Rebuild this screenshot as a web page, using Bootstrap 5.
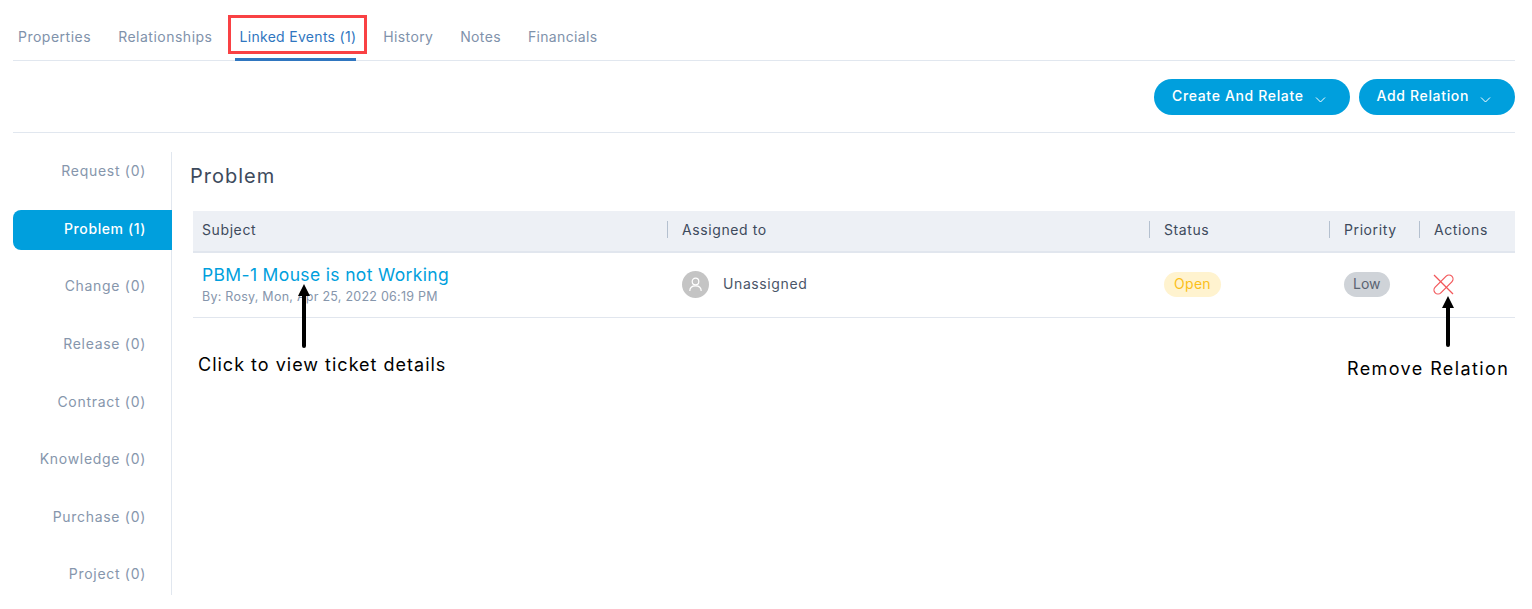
<!DOCTYPE html>
<html lang="en">
  <head>
    <meta charset="UTF-8" />
    <meta name="viewport" content="width=device-width, initial-scale=1.0" />
    <title>Linked Events</title>
    <link href="https://cdn.jsdelivr.net/npm/bootstrap@5.3.0/dist/css/bootstrap.min.css" rel="stylesheet" />
    <style>
      body {
        font-family: "Inter", "Liberation Sans", sans-serif;
        background: #fff;
        color: #3d4a5c;
        overflow: hidden;
      }
      .page-wrap {
        position: relative;
        height: 609px;
        padding: 0 17px 0 13px;
      }
      /* tabs */
      .tab-bar {
        height: 61px;
        gap: 22px;
        border-bottom: 1px solid #e1e7ef;
      }
      .tab-item {
        height: 61px;
        padding: 28px 0 0 5px;
        font-size: 14px;
        line-height: 18px;
        letter-spacing: 0.5px;
        color: #7f92ab;
        text-decoration: none;
      }
      .tab-item.is-active {
        color: #2f76c0;
        letter-spacing: 0.3px;
        border-bottom: 3px solid #2f76c0;
      }
      .tab-item.is-active ~ .tab-item {
        letter-spacing: 0.35px;
      }
      .tab-highlight {
        position: absolute;
        left: 228px;
        top: 15px;
        width: 139px;
        height: 39px;
        border: 3px solid #f94144;
      }
      /* toolbar */
      .tool-row {
        height: 72px;
        padding-top: 18px;
        gap: 9px;
        border-bottom: 1px solid #e1e7ef;
      }
      .btn-relate {
        height: 36px;
        padding: 0 24px 4px 18px;
        border: 0;
        border-radius: 18px;
        background: #009fdd;
        color: #fff;
        font-size: 14px;
        font-weight: 500;
        letter-spacing: 0.65px;
      }
      .btn-relate svg {
        margin: 8px 0 0 11px;
      }
      /* side menu */
      .body-row {
        margin-top: 19px;
      }
      .side-menu {
        width: 159px;
        flex: none;
        height: 443px;
        padding-top: 0.4px;
        gap: 17.75px;
        border-right: 1px solid #e1e7ef;
      }
      .side-item {
        height: 40px;
        line-height: 38px;
        padding-right: 25px;
        text-align: right;
        font-size: 14px;
        letter-spacing: 0.7px;
        color: #8696ac;
      }
      .side-item.is-active {
        margin-right: -1px;
        padding-right: 26px;
        background: #009fdd;
        color: #fff;
        font-weight: 500;
        letter-spacing: 0.6px;
        border-radius: 8px 0 0 8px;
      }
      /* table */
      .main-pane {
        padding-left: 18px;
      }
      .pane-title {
        font-size: 20px;
        line-height: 24px;
        font-weight: 400;
        letter-spacing: 1px;
        margin: 12px 0 23px;
        color: #3d4a5c;
      }
      .rel-table {
        margin-left: 3px;
        width: 1322px;
        table-layout: fixed;
        margin-bottom: 0;
      }
      .rel-table th {
        height: 41px;
        padding: 0 0 3px;
        background: #edf0f5;
        border-bottom: 2px solid #e1e6ee;
        font-size: 14px;
        font-weight: 400;
        letter-spacing: 0.6px;
        color: #3d4a5c;
        vertical-align: middle;
      }
      .head-cell {
        border-left: 1px solid #b4c0cf;
        padding-left: 14px;
        line-height: 17px;
      }
      .head-cell.no-rule {
        border-left: 0;
        padding-left: 9px;
      }
      .rel-table td {
        height: 65px;
        padding: 0 0 0 15px;
        border-bottom: 1px solid #e1e6ee;
        vertical-align: middle;
        font-size: 14px;
        color: #4a5668;
      }
      .rel-table td:first-child {
        padding-left: 9px;
      }
      .ticket-link {
        display: block;
        font-size: 17.5px;
        line-height: 22px;
        letter-spacing: 0.35px;
        margin-bottom: 3px;
        color: #009fdd;
        text-decoration: none;
      }
      .ticket-meta {
        font-size: 12.5px;
        line-height: 16px;
        letter-spacing: 0.25px;
        color: #8696ac;
      }
      .user-dot {
        width: 27px;
        height: 27px;
        border-radius: 50%;
        background: #c4c4c4;
      }
      .user-name {
        padding-bottom: 2px;
        margin-left: 14px;
        letter-spacing: 0.6px;
      }
      .state-pill {
        display: inline-block;
        height: 25px;
        line-height: 23px;
        padding: 0 9px;
        border-radius: 13px;
        font-size: 14px;
      }
      .pill-open {
        background: #fff3cf;
        color: #fbbf1a;
        padding: 0 10px;
        letter-spacing: 0.3px;
      }
      .pill-low {
        background: #cfd3d8;
        color: #5a6472;
      }
      .unlink-icon {
        margin-left: -2px;
      }
      /* annotations */
      .note-arrow {
        position: absolute;
      }
      .note-text {
        position: absolute;
        font-size: 18px;
        line-height: 24px;
        letter-spacing: 1px;
        color: #000;
        white-space: nowrap;
      }
      .note-wide {
        letter-spacing: 1.4px;
      }
    </style>
  </head>
  <body>
    <div class="page-wrap">
      <nav class="tab-bar d-flex">
        <a class="tab-item" href="#">Properties</a>
        <a class="tab-item" href="#">Relationships</a>
        <a class="tab-item is-active" href="#">Linked Events (1)</a>
        <a class="tab-item" href="#">History</a>
        <a class="tab-item" href="#">Notes</a>
        <a class="tab-item" href="#">Financials</a>
      </nav>

      <div class="tool-row d-flex justify-content-end align-items-start">
        <button class="btn-relate d-flex align-items-center" type="button">
          Create And Relate
          <svg width="11" height="7" viewBox="0 0 11 7" fill="none" stroke="#fff" stroke-width="1"><path d="M1 1.5 5.5 6 10 1.5" /></svg>
        </button>
        <button class="btn-relate d-flex align-items-center" type="button">
          Add Relation
          <svg width="11" height="7" viewBox="0 0 11 7" fill="none" stroke="#fff" stroke-width="1"><path d="M1 1.5 5.5 6 10 1.5" /></svg>
        </button>
      </div>

      <div class="body-row d-flex">
        <div class="side-menu d-flex flex-column">
          <div class="side-item">Request (0)</div>
          <div class="side-item is-active">Problem (1)</div>
          <div class="side-item">Change (0)</div>
          <div class="side-item">Release (0)</div>
          <div class="side-item">Contract (0)</div>
          <div class="side-item">Knowledge (0)</div>
          <div class="side-item">Purchase (0)</div>
          <div class="side-item">Project (0)</div>
        </div>

        <div class="main-pane flex-grow-1">
          <h2 class="pane-title">Problem</h2>
          <table class="table rel-table">
            <colgroup>
              <col style="width: 474px" />
              <col style="width: 482px" />
              <col style="width: 180px" />
              <col style="width: 90px" />
              <col style="width: 96px" />
            </colgroup>
            <thead>
              <tr>
                <th><div class="head-cell no-rule">Subject</div></th>
                <th><div class="head-cell">Assigned to</div></th>
                <th><div class="head-cell">Status</div></th>
                <th><div class="head-cell">Priority</div></th>
                <th><div class="head-cell">Actions</div></th>
              </tr>
            </thead>
            <tbody>
              <tr>
                <td>
                  <a class="ticket-link" href="#">PBM-1 Mouse is not Working</a>
                  <div class="ticket-meta">By: Rosy, Mon, Apr 25, 2022 06:19 PM</div>
                </td>
                <td>
                  <div class="d-flex align-items-center">
                    <span class="user-dot d-flex align-items-center justify-content-center">
                      <svg width="15" height="15" viewBox="0 0 15 15" fill="none" stroke="#fff" stroke-width="1.2"><circle cx="7.5" cy="4.5" r="3.3" /><path d="M1.8 14c0-3.2 2.2-5.2 5.7-5.2s5.7 2 5.7 5.2" /></svg>
                    </span>
                    <span class="user-name">Unassigned</span>
                  </div>
                </td>
                <td><span class="state-pill pill-open">Open</span></td>
                <td><span class="state-pill pill-low">Low</span></td>
                <td>
                  <svg class="d-block unlink-icon" width="23" height="23" viewBox="0 0 23 23" fill="none" stroke="#f2575a" stroke-width="1.2"><path d="M2 2 21 21" /><path d="M3.17 14.17 14.17 3.17a4 4 0 0 1 5.66 5.66L8.83 19.83a4 4 0 0 1-5.66-5.66Z" /></svg>
                </td>
              </tr>
            </tbody>
          </table>
        </div>
      </div>

      <!-- annotations drawn over the screenshot -->
      <div class="tab-highlight"></div>
      <svg class="note-arrow" style="left: 297px; top: 284px" width="14" height="66" viewBox="0 0 14 66"><path d="M7 0 13 12H9V62a2 2 0 0 1-4 0V12H1Z" fill="#000" /></svg>
      <div class="note-text" style="left: 198px; top: 353px">Click to view ticket details</div>
      <svg class="note-arrow" style="left: 1441px; top: 296px" width="14" height="53" viewBox="0 0 14 53"><path d="M7 0 13 12H9V49a2 2 0 0 1-4 0V12H1Z" fill="#000" /></svg>
      <div class="note-text note-wide" style="left: 1347px; top: 357px">Remove Relation</div>
    </div>

    <script src="https://cdn.jsdelivr.net/npm/bootstrap@5.3.0/dist/js/bootstrap.bundle.min.js"></script>
  </body>
</html>
